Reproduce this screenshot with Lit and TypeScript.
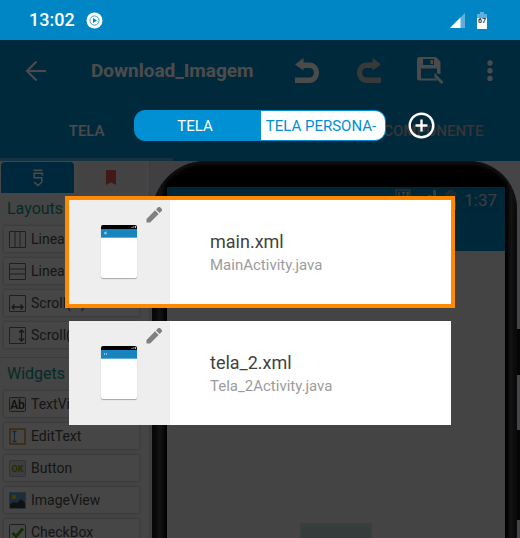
import { LitElement, html, css, svg } from "lit";
import { customElement, property, state } from "lit/decorators.js";
import { classMap } from "lit/directives/class-map.js";

const pencil = html`<svg class="pencil" viewBox="0 0 24 24" aria-hidden="true">
  <path fill="#808080" d="M2 17.2V22h4.800L18.200 10.600 13.400 5.800 2 17.200zM22.200 6.600c.8-.8.8-2 0-2.800l-2-2c-.8-.8-2-.8-2.800 0L14.700 4.500l4.800 4.800 2.700-2.700z"/>
</svg>`;

@customElement("screen-card")
export class ScreenCard extends LitElement {
  @property() file = "";
  @property() activity = "";
  @property({ type: Boolean }) selected = false;
  @property({ type: Boolean }) fullscreen = false;

  static styles = css`
    :host { display: block; }
    .card {
      display: flex; width: 100%; height: 112px; padding: 0; box-sizing: border-box;
      border: 4px solid transparent; background: #fff; background-clip: padding-box;
      font-family: Roboto, sans-serif; text-align: left;
    }
    .card.selected { border-color: #ff8a00; }
    .preview {
      position: relative; flex: 0 0 101px; display: flex; align-items: center; justify-content: center;
      box-sizing: border-box; padding: 0 2px 2px 0; background: #eee;
    }
    .pencil { position: absolute; top: 6px; right: 7px; width: 18px; height: 18px; }
    .thumb { width: 36px; height: 53px; border-radius: 2px; background: #fff; overflow: hidden; box-shadow: 0 1px 1px rgba(0, 0, 0, .3); }
    .thumb svg { display: block; width: 36px; height: 13px; }
    .text { display: flex; flex-direction: column; justify-content: center; padding: 2px 0 0 40px; }
    .file { font-size: 18px; line-height: 24px; color: #414141; }
    .activity { font-size: 15px; line-height: 22px; color: #9c9c9c; }
  `;

  render() {
    return html`<button class=${classMap({ card: true, selected: this.selected })}>
      <span class="preview">
        <span class="thumb">
          <svg viewBox="0 0 36 13" aria-hidden="true">
            <rect width="36" height="5" fill="#000"/>
            <rect y="4" width="36" height="9" fill="#1783bf"/>
            <rect y="12" width="36" height="1" fill="#5eaed8"/>
            <path d="M30 3l1.500-1.500V3zM32.500 1h.8v2h-.8zM34 1h1v2h-1z" fill="#bbb"/>
            ${this.fullscreen
              ? svg`<path d="M3 7h1v2H3zM5 7h1v2H5z" fill="#8ac4e4"/>`
              : svg`<path d="M5 6.500L3.500 8 5 9.500M3.500 8H6" fill="none" stroke="#d8edf8" stroke-width=".8"/>`}
          </svg>
        </span>
        ${pencil}
      </span>
      <span class="text">
        <span class="file">${this.file}</span>
        <span class="activity">${this.activity}</span>
      </span>
    </button>`;
  }
}

const glyph: Record<string, unknown> = {
  linearH: svg`<path d="M.5.500h16v16H.5zM6 .5v16M11 .5v16" fill="none" stroke="#686868"/>`,
  linearV: svg`<path d="M.5.500h16v16H.5zM.5 6h16M.5 11h16" fill="none" stroke="#686868"/>`,
  scrollH: svg`<path d="M.5.500h16v16H.5z" fill="none" stroke="#686868"/><path d="M3 12h11M5.500 9.500L3 12l2.500 2.500M11.500 9.500L14 12l-2.500 2.500" fill="none" stroke="#555" stroke-width="1.400"/>`,
  scrollV: svg`<path d="M.5.500h16v16H.5z" fill="none" stroke="#686868"/><path d="M12.500 3v11M10 5.500L12.500 3 15 5.500M10 11.500l2.500 2.500 2.500-2.500" fill="none" stroke="#555" stroke-width="1.400"/>`,
  text: svg`<rect x=".5" y="1.500" width="16" height="14" rx="1" fill="#ddd" stroke="#666"/><text x="8.500" y="13" text-anchor="middle" font-family="Roboto, sans-serif" font-weight="500" font-size="12" fill="#333">Ab</text>`,
  edit: svg`<rect x="1" y="1" width="15" height="15" fill="#eee" stroke="#c98b35" stroke-width="1.600"/><path d="M3.500 3.500h4M3.500 13.500h4M5.500 3.500v10" fill="none" stroke="#4b86b8" stroke-width="1.300"/>`,
  button: svg`<rect x=".5" y=".5" width="16" height="16" rx="1" fill="#cfcfcf" stroke="#aaa"/><text x="8.500" y="12" text-anchor="middle" font-family="Roboto, sans-serif" font-weight="700" font-size="9" fill="#6e9a10">OK</text>`,
  image: svg`<rect x=".5" y=".5" width="16" height="16" fill="#5e9bd0" stroke="#8aa"/><circle cx="5" cy="5" r="2.200" fill="#f2c71b"/><path d="M1 12l4-2 3 1 4-4 4 4v5H1z" fill="#343a40"/>`,
  check: svg`<rect x=".5" y=".5" width="16" height="16" rx="1" fill="#eee" stroke="#666"/><path d="M3.500 9l3.500 3.500 7-8" fill="none" stroke="#43a10c" stroke-width="3"/>`,
};

interface Group { title: string; items: [string, string][]; }

const groups: Group[] = [
  { title: "Layouts", items: [["linearH", "Linear(H)"], ["linearV", "Linear(V)"], ["scrollH", "Scroll(H)"], ["scrollV", "Scroll(V)"]] },
  { title: "Widgets", items: [["text", "TextView"], ["edit", "EditText"], ["button", "Button"], ["image", "ImageView"], ["check", "CheckBox"]] },
];

@customElement("widget-palette")
export class WidgetPalette extends LitElement {
  static styles = css`
    :host { display: block; background: #e6e6e6; border-right: 1px solid #cacad2; overflow: hidden; font-family: Roboto, sans-serif; }
    .tabs { display: grid; grid-template-columns: 73px 1fr; gap: 3px; padding: 1px 4px 0 1px; }
    .tab { display: flex; align-items: center; justify-content: center; height: 31px; padding: 0; border: 0; border-radius: 4px 4px 0 0; background: #e2e2e2; }
    .tab.on { background: #0288c8; }
    .group { margin-right: 6px; padding: 0 4px 9px 4px; }
    .group + .group { border-top: 1px solid #c8c8c8; }
    .title { margin: 0; padding: 4px 0 5px 3px; font-size: 16px; line-height: 24px; font-weight: 400; color: #0a9480; }
    .list { display: flex; flex-direction: column; gap: 6px; }
    .item {
      display: flex; align-items: center; gap: 5px; height: 26px; padding: 0 5px; border: 0; border-radius: 1px;
      background: #e9e9e9; box-shadow: 0 0 2px 1px rgba(0, 0, 0, .14); font: 14px/20px Roboto, sans-serif; color: #4a4a4a;
    }
    .item svg { width: 17px; height: 17px; }
  `;

  render() {
    return html`
      <div class="tabs">
        <button class="tab on" aria-label="Widgets">
          <svg width="12" height="18" viewBox="0 0 12 18" fill="none" stroke="#fff" stroke-width="1.500">
            <path d="M1.500 1.200h9M10.300 6.500V4.200H2.200v4.600h7.600v4.400L6 16.600l-3.800-3.400"/>
          </svg>
        </button>
        <button class="tab" aria-label="Favoritos">
          <svg width="10" height="15" viewBox="0 0 10 15"><path d="M0 1a1 1 0 011-1h8a1 1 0 011 1v14l-5-2.500L0 15z" fill="#e0564e"/></svg>
        </button>
      </div>
      ${groups.map((g) => html`<section class="group">
        <h2 class="title">${g.title}</h2>
        <div class="list">
          ${g.items.map(([icon, label]) => html`<button class="item"><svg viewBox="0 0 17 17" aria-hidden="true">${glyph[icon]}</svg>${label}</button>`)}
        </div>
      </section>`)}`;
  }
}

@customElement("phone-preview")
export class PhonePreview extends LitElement {
  static styles = css`
    :host { display: flex; background: linear-gradient(90deg, #d8d8e0 90%, transparent 90%), linear-gradient(#e8e8f2 168px, #111 168px 214px, #e8e8f2 214px 269px, #111 269px 359px, #e8e8f2 359px); overflow: hidden; font-family: Roboto, sans-serif; }
    .body {
      flex: 1; display: flex; margin: 0 3px 0 2px; padding: 26px 12px 0 15px; border-radius: 54px 48px 0 0;
      background: linear-gradient(90deg, #000, #444 8px, #000 15px, #000 calc(100% - 11px), #444 calc(100% - 6px), #111);
      box-shadow: inset 0 3px 4px #444;
    }
    .screen { flex: 1; display: flex; flex-direction: column; background: #e3e3e3; }
    .status { display: flex; align-items: center; justify-content: flex-end; height: 26px; padding-right: 8px; background: #0084bc; color: #ccc; font-size: 17px; line-height: 26px; }
    .status svg { margin-right: 7px; }
    .appbar { height: 38px; background: #0288c5; }
    .view { width: 72px; height: 40px; margin: auto auto -25px 133px; box-sizing: border-box; border: 3px solid #bcd4cf; background: #b5c9c8; }
  `;

  render() {
    return html`<div class="body"><div class="screen">
      <div class="status">
        <svg width="62" height="22" viewBox="0 0 62 22" aria-hidden="true">
          <path d="M1 1h14v8H1z" fill="none" stroke="#bbb"/>
          <path d="M4 3v5h2M7 3.500h3M8.500 3v5M14 3.500h-2V8h2M12 5.500h2" fill="none" stroke="#ccc" stroke-width="1.300"/>
          <path d="M33 6h3v8h-3zM38 1h3v13h-3z" fill="#bbb"/>
          <path d="M53 1h5v2h3v10H50V3h3z" fill="#5d8fa8"/><path d="M50 13h11v8H50z" fill="#ccc"/>
        </svg>
        <span>1:37</span>
      </div>
      <div class="appbar"></div>
      <div class="view"></div>
    </div></div>`;
  }
}

@customElement("app-root")
export class AppRoot extends LitElement {
  @state() private selected = 0;

  static styles = css`
    :host { display: flex; flex-direction: column; height: 100vh; overflow: hidden; background: #0086c4; color: #fff; font-family: Roboto, sans-serif; }
    .status { flex: none; display: flex; align-items: center; height: 40px; padding: 0 33px 0 29px; font-size: 18px; line-height: 40px; font-weight: 500; }
    .music { margin-left: 11px; }
    .signal { margin-left: auto; margin-right: 12px; }
    .page { position: relative; flex: 1; min-height: 0; display: flex; flex-direction: column; }
    .toolbar { flex: none; display: flex; align-items: center; height: 61px; background: #0089c5; }
    .tool { display: flex; align-items: center; justify-content: center; flex: 0 0 61px; height: 61px; padding: 0; border: 0; background: none; color: #fafafa; }
    .back { flex-basis: 71px; }
    .title { flex: 1; margin: 0; padding-left: 20px; font-size: 19px; line-height: 24px; font-weight: 700; white-space: nowrap; }
    .tool.off { color: #c0c0c0; }
    .tabs { flex: none; display: grid; grid-template-columns: repeat(3, 1fr); height: 60px; background: #0089c5; }
    .tab { padding: 3px 0 0; border: 0; border-bottom: 3px solid transparent; background: none; color: #b4b4b4; font: 500 15px/20px Roboto, sans-serif; }
    .tab.on { border-bottom-color: #4ba5d2; color: #fafafa; }
    .work { flex: 1; min-height: 0; display: grid; grid-template-columns: 150px 1fr; }
    .scrim {
      position: absolute; inset: 0; display: flex; flex-direction: column; align-items: center; padding-top: 70px;
      background: rgba(0, 0, 0, .7);
    }
    .head { display: grid; grid-template-columns: 1fr auto 1fr; align-items: center; width: 100%; margin-bottom: 55px; }
    .switch { grid-column: 2; display: grid; grid-template-columns: 1fr 1fr; width: 252px; height: 31px; }
    .seg { padding: 0 4px 0 0; border: 1px solid #0090d3; background: #0090d3; color: #fff; font: 15px/20px Roboto, sans-serif; white-space: nowrap; }
    .seg:first-child { border-radius: 11px 0 0 11px; }
    .seg:last-child { border-radius: 0 11px 11px 0; background: #fff; color: #0090d3; }
    .add { justify-self: start; display: flex; margin-left: 22px; padding: 0; border: 0; background: none; }
    .cards { display: flex; flex-direction: column; gap: 9px; width: 75%; }
  `;

  render() {
    return html`
      <header class="status">
        <span>13:02</span>
        <svg class="music" width="17" height="17" viewBox="0 0 17 17" aria-hidden="true">
          <circle cx="8.500" cy="8.500" r="8" fill="#fff"/><circle cx="8.500" cy="8.500" r="4.600" fill="none" stroke="#3aa0d0"/><path d="M7 6l4 2.500L7 11z" fill="#0086c4"/>
        </svg>
        <svg class="signal" width="15" height="15" viewBox="0 0 15 15" aria-hidden="true">
          <path d="M15 0v15H0z" fill="#5cb0da"/><path d="M10.500 4.500V15H0z" fill="#fff"/>
        </svg>
        <svg width="10" height="17" viewBox="0 0 10 17" aria-hidden="true">
          <path d="M3 0h4v2h3v4H0V2h3z" fill="#5cb0da"/><path d="M0 6h10v11H0z" fill="#fff"/>
          <text x="5" y="11" text-anchor="middle" font-family="Roboto, sans-serif" font-weight="700" font-size="7" fill="#003d5c">67</text>
        </svg>
      </header>
      <div class="page">
        <div class="toolbar">
          <button class="tool back" aria-label="Voltar">
            <svg width="22" height="22" viewBox="0 0 22 22" fill="none" stroke="currentColor" stroke-width="2.200"><path d="M21 11H2.500M11.500 1.500L2 11l9.500 9.500"/></svg>
          </button>
          <h1 class="title">Download_Imagem</h1>
          <button class="tool" aria-label="Desfazer">
            <svg width="26" height="26" viewBox="0 0 26 26"><path d="M9.500 0v4.500h7a9.500 10.300 0 010 20.500H1v-5.500h15a4.500 4.800 0 000-9.500H9.500v2.500L1 6.500z" fill="currentColor"/></svg>
          </button>
          <button class="tool off" aria-label="Refazer">
            <svg width="26" height="26" viewBox="0 0 26 26"><path d="M17.500 0v4.500h-7a9.500 10.300 0 000 20.500H26v-5.500H11a4.500 4.800 0 010-9.500h6.500v2.500L26 6.500z" fill="currentColor"/></svg>
          </button>
          <button class="tool" aria-label="Salvar como">
            <svg width="30" height="27" viewBox="-3 0 30 27">
              <path fill="currentColor" fill-rule="evenodd" d="M2.500 0H19l4.500 4.500V17L17 16H20v-4.500H4V21.500h14.500l2 2H2.500A2.500 2.500 0 010 21V2.500A2.500 2.500 0 012.500 0zM6 2v6h11V2zM13.500 3h2.500v4h-2.500z"/>
              <path d="M17.500 16l9 9-2 2-7-7z" fill="currentColor"/>
            </svg>
          </button>
          <button class="tool" aria-label="Mais">
            <svg width="6" height="22" viewBox="0 0 6 22" fill="currentColor"><circle cx="3" cy="3" r="2.700"/><circle cx="3" cy="10.700" r="2.700"/><circle cx="3" cy="18.400" r="2.700"/></svg>
          </button>
        </div>
        <nav class="tabs">
          <button class="tab on">TELA</button>
          <button class="tab" aria-label="Evento"></button>
          <button class="tab">COMPONENTE</button>
        </nav>
        <main class="work">
          <widget-palette></widget-palette>
          <phone-preview></phone-preview>
        </main>
        <div class="scrim" role="dialog" aria-label="Telas">
          <div class="head">
            <div class="switch">
              <button class="seg">TELA</button>
              <button class="seg">TELA PERSONA-</button>
            </div>
            <button class="add" aria-label="Adicionar">
              <svg width="27" height="27" viewBox="0 0 27 27" fill="none" stroke="#fff" stroke-width="2.400"><circle cx="13.500" cy="13.500" r="11.800"/><path d="M13.500 7.500v12M7.500 13.500h12"/></svg>
            </button>
          </div>
          <div class="cards">
            <screen-card file="main.xml" activity="MainActivity.java" ?selected=${this.selected === 0} @click=${() => (this.selected = 0)}></screen-card>
            <screen-card file="tela_2.xml" activity="Tela_2Activity.java" fullscreen ?selected=${this.selected === 1} @click=${() => (this.selected = 1)}></screen-card>
          </div>
        </div>
      </div>`;
  }
}
